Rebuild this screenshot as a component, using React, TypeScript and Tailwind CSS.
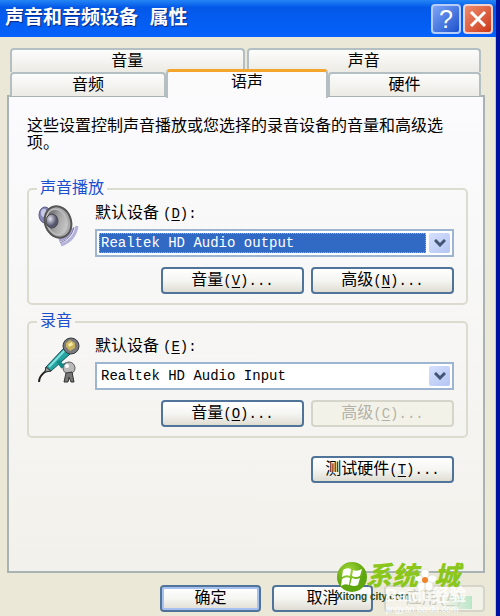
import React from "react";

const button =
  "flex h-[27px] items-center justify-center rounded-[4px] border-2 border-[#4f7399] bg-linear-to-b from-white via-[#f5f5f2] to-[#dfddd3] text-[16px] leading-[18px] text-black";
const disabledButton =
  "flex h-[27px] items-center justify-center rounded-[4px] border-2 border-[#d6d5ca] bg-[#f3f2e8] text-[16px] leading-[18px]";

function Key({ letter, suffix }: { letter: string; suffix: string }) {
  return (
    <span className="whitespace-pre text-[14px]">
      (<u className="underline underline-offset-2">{letter}</u>){suffix}
    </span>
  );
}

function Speaker() {
  return (
    <svg viewBox="0 0 44 44" className="h-[44px] w-[44px] shrink-0" aria-hidden="true">
      <defs>
        <linearGradient id="cone" x1="0" y1="0" x2="1" y2="1">
          <stop offset="0" stopColor="#4c4c50" />
          <stop offset="0.5" stopColor="#a3a3a3" />
          <stop offset="1" stopColor="#d8d8d8" />
        </linearGradient>
        <radialGradient id="dome" cx="0.35" cy="0.35">
          <stop offset="0" stopColor="#e4e4f2" />
          <stop offset="1" stopColor="#55556c" />
        </radialGradient>
      </defs>
      <ellipse cx="9" cy="11" rx="6" ry="8" fill="#8787b8" stroke="#5c5c8c" />
      <ellipse cx="8" cy="9" rx="3" ry="4" fill="#c9c9e8" />
      <path d="M36 24Q33 33 23 36" fill="none" stroke="#a7a3cf" strokeWidth="4" />
      <path d="M41 22Q39 36 25 41" fill="none" stroke="#b5b2da" strokeWidth="3" />
      <path d="M38 23Q36 34 24 39" fill="none" stroke="#7d79aa" strokeWidth="1" />
      <ellipse cx="22" cy="18" rx="13" ry="16" transform="rotate(-20 22 18)" fill="#a9a9ab" stroke="#555" strokeWidth="2" />
      <ellipse cx="21" cy="18" rx="10" ry="13" transform="rotate(-20 21 18)" fill="url(#cone)" stroke="#c4c4c4" />
      <ellipse cx="16" cy="17" rx="6" ry="7" fill="url(#dome)" stroke="#48484e" />
    </svg>
  );
}

function Microphone() {
  return (
    <svg viewBox="0 0 44 48" className="h-[48px] w-[44px] shrink-0" aria-hidden="true">
      <path d="M3 45Q3 39 10 34" fill="none" stroke="#222" strokeWidth="2" />
      <path d="M10 30L28 11L34 17L15 34L9 35Z" fill="#25a4a2" stroke="#164f58" />
      <path d="M13 30L29 13" stroke="#80e2dc" strokeWidth="2" />
      <path d="M9 35L10 30L15 34Z" fill="#999" stroke="#333" />
      <path d="M22 24L26 29L31 27" fill="none" stroke="#118a88" strokeWidth="4" />
      <circle cx="35" cy="9" r="8" fill="#77797e" stroke="#36383c" />
      <path d="M30 6L34 3L39 6L39 11L34 14L30 10Z" fill="#c9b35c" />
      <path d="M32 7L36 5L37 8L33 10Z" fill="#f3e9a8" />
      <circle cx="33" cy="31" r="6" fill="#b9b9b9" stroke="#5b5b5b" />
      <circle cx="31" cy="29" r="2" fill="#fff" />
      <path d="M30 36L28 45L32 45L33 40L35 45L38 45L36 35Z" fill="#777" stroke="#333" />
    </svg>
  );
}

function DeviceSelect({ id, value, active }: { id: string; value: string; active?: boolean }) {
  return (
    <div className="mt-[5px] flex h-[28px] gap-[3px] border-2 border-[#9db5d0] bg-white p-[2px]">
      <select
        id={id}
        className={
          active
            ? "h-full min-w-0 flex-1 appearance-none border border-dotted border-[#d9a650] bg-[#316ac5] pl-px text-[14px] leading-[16px] text-white outline-none"
            : "h-full min-w-0 flex-1 appearance-none border border-transparent bg-white pl-px text-[14px] leading-[16px] text-black outline-none"
        }
      >
        <option>{value}</option>
      </select>
      <span className="flex w-[21px] items-center justify-center rounded-[2px] bg-linear-to-br from-[#d5e0fd] to-[#b4c5f3]">
        <svg viewBox="0 0 12 8" className="h-[8px] w-[12px]" aria-hidden="true">
          <path d="M1 1L6 6L11 1" fill="none" stroke="#435574" strokeWidth="3" />
        </svg>
      </span>
    </div>
  );
}

function DeviceGroup(props: {
  id: string;
  legend: string;
  icon: React.ReactNode;
  letter: string;
  value: string;
  active?: boolean;
  volumeKey: string;
  advancedKey: string;
  advancedDisabled?: boolean;
}) {
  return (
    <fieldset className="min-w-0 rounded-[5px] border-2 border-[#dcdbd0] pr-[12px] pb-[9px] pl-[7px]">
      <legend className="ml-[1px] px-[3px] text-[16px] leading-[18px] text-[#1c4ed0]">{props.legend}</legend>
      <div className="flex gap-[15px] pt-[6px]">
        {props.icon}
        <div className="min-w-0 flex-1">
          <label htmlFor={props.id} className="flex items-baseline gap-1 text-[16px] leading-[20px]">
            默认设备
            <Key letter={props.letter} suffix=":" />
          </label>
          <DeviceSelect id={props.id} value={props.value} active={props.active} />
          <div className="mt-[10px] ml-[66px] grid grid-cols-2 gap-[7px]">
            <button type="button" className={button}>
              音量
              <Key letter={props.volumeKey} suffix="..." />
            </button>
            <button type="button" disabled={props.advancedDisabled} className={props.advancedDisabled ? `${disabledButton} text-[#b3b2a8]` : button}>
              高级
              <Key letter={props.advancedKey} suffix="..." />
            </button>
          </div>
        </div>
      </div>
    </fieldset>
  );
}

const tab =
  "flex h-[24px] items-center justify-center rounded-t-[4px] border-2 border-b-0 border-[#b3bfc2] bg-linear-to-b from-[#fcfcfb] to-[#ecebe5] pt-[2px] text-[16px] leading-[18px]";

function Watermark() {
  return (
    <div className="pointer-events-none absolute right-[18px] bottom-0 h-[56px] w-[142px]" aria-hidden="true">
      <svg viewBox="0 0 142 56" className="absolute inset-0 h-full w-full">
        <defs>
          <radialGradient id="orb" cx="0.4" cy="0.3">
            <stop offset="0" stopColor="#a6d93a" />
            <stop offset="1" stopColor="#5ea60d" />
          </radialGradient>
          <linearGradient id="glow" x1="0" y1="0" x2="1" y2="0">
            <stop offset="0" stopColor="#cfe8d4" stopOpacity="0" />
            <stop offset="1" stopColor="#b9e6c8" />
          </linearGradient>
        </defs>
        <rect x="104" y="36" width="32" height="13" fill="url(#glow)" />
        <circle cx="16" cy="17" r="15" fill="url(#orb)" />
        <path d="M7 10Q11 7 15 9L14 16Q10 14 6 17ZM17 10Q21 12 26 9L24 16Q20 18 16 16ZM6 19Q10 16 14 18L13 25Q9 23 5 26ZM16 18Q20 20 24 18L22 25Q18 27 14 25Z" fill="#fff" />
        <g fill="#fff" stroke="#e6e6d7">
          <ellipse cx="89" cy="14" rx="4" ry="5" />
          <ellipse cx="96" cy="19" rx="5" ry="4" />
          <ellipse cx="93" cy="26" rx="4" ry="5" />
          <ellipse cx="85" cy="26" rx="4" ry="5" />
          <ellipse cx="82" cy="19" rx="5" ry="4" />
        </g>
        <circle cx="89" cy="20" r="3" fill="#f0832a" />
      </svg>
      <span className="absolute top-[4px] left-[30px] text-[26px] leading-[28px] font-black text-[#8bc71b] italic">系统</span>
      <span className="absolute top-[4px] left-[98px] text-[26px] leading-[28px] font-black text-[#8bc71b] italic">城</span>
      <span className="absolute top-[31px] left-0 font-['Liberation_Sans',sans-serif] text-[10px] leading-[12px] font-bold whitespace-pre text-[#2c4a1c]">
        Xitong city.com
      </span>
      <span className="absolute top-[27px] left-[49px] font-['Liberation_Sans','Noto_Sans_CJK_SC',sans-serif] text-[17px] leading-[18px] font-bold whitespace-nowrap text-white/80">
        Baidu经验
      </span>
      <span className="absolute top-[44px] left-[50px] font-['Liberation_Sans',sans-serif] text-[9px] leading-[10px] text-white">
        jingyan.baidu.com
      </span>
    </div>
  );
}

export default function App() {
  return (
    <div className="relative w-full overflow-hidden border-r-4 border-[#0010a0] bg-[#ebe8d7] font-['Liberation_Mono','Noto_Sans_CJK_SC',monospace] text-black">
      <header className="-mr-1 flex h-[37px] items-center justify-between bg-linear-to-b from-[#2585f5] via-[#0458e8] via-20% to-[#0562fb] pr-[7px] pl-[5px]">
        <h1 className="text-[19px] leading-[24px] font-bold whitespace-pre text-white text-shadow-[1px_1px_1px_#0a2a80]">声音和音频设备 属性</h1>
        <div className="flex gap-[2px]">
          <button type="button" aria-label="帮助" className="flex h-[30px] w-[30px] items-center justify-center rounded-[4px] border-2 border-[#b5cdf8] bg-linear-to-br from-[#7ea4f6] to-[#1c50cc] font-['Liberation_Sans',sans-serif] text-[25px] leading-[26px] text-white">
            ?
          </button>
          <button type="button" aria-label="关闭" className="flex h-[30px] w-[30px] items-center justify-center rounded-[4px] border-2 border-[#f0d2d2] bg-linear-to-br from-[#ee8b6c] to-[#cb3512]">
            <svg viewBox="0 0 18 18" className="h-[18px] w-[18px]" aria-hidden="true">
              <path d="M2 2L16 16M16 2L2 16" stroke="#fff" strokeWidth="3" />
            </svg>
          </button>
        </div>
      </header>

      <main className="border-r border-[#a9c8f5] pt-[11px] pr-[10px] pl-[7px]">
        <div role="tablist" className="pr-[4px] pl-[3px]">
          <div className="grid grid-cols-2 gap-[2px]">
            <button type="button" role="tab" className={tab}>音量</button>
            <button type="button" role="tab" className={tab}>声音</button>
          </div>
          <div className="grid grid-cols-[156fr_162fr_153fr] items-end">
            <button type="button" role="tab" className={tab}>音频</button>
            <button type="button" role="tab" aria-selected="true" className="relative z-10 -mt-[3px] -mb-[2px] flex h-[29px] items-start justify-center rounded-t-[4px] border-x-2 border-t-3 border-x-[#b3bfc2] border-t-[#f3a62b] bg-[#fbfbfc] pt-[2px] text-[16px] leading-[18px]">
              语声
            </button>
            <button type="button" role="tab" className={tab}>硬件</button>
          </div>
        </div>

        <section role="tabpanel" className="-mt-px border-2 border-[#a9b3b4] bg-linear-to-b from-[#fbfbfe] to-[#f2f1eb] pt-[22px] pr-[15px] pb-[88px] pl-[18px]">
          <p className="min-h-[34px] text-[16px] leading-[17px]">
            这些设置控制声音播放或您选择的录音设备的音量和高级选
            <br />
            项。
          </p>
          <div className="mt-[27px] flex flex-col gap-[8px]">
            <DeviceGroup id="playback" legend="声音播放" icon={<Speaker />} letter="D" value="Realtek HD Audio output" active volumeKey="V" advancedKey="N" />
            <DeviceGroup id="recording" legend="录音" icon={<Microphone />} letter="E" value="Realtek HD Audio Input" volumeKey="O" advancedKey="C" advancedDisabled />
          </div>
          <div className="mt-[18px] flex justify-end pr-[14px]">
            <button type="button" className={`${button} w-[143px]`}>
              测试硬件
              <Key letter="T" suffix="..." />
            </button>
          </div>
        </section>

        <footer className="flex justify-end gap-[11px] pt-[12px] pb-[4px]">
          <button type="button" className={`${button} w-[101px] shadow-[inset_0_0_0_2px_#a6c1f0]`}>确定</button>
          <button type="button" className={`${button} w-[101px]`}>取消</button>
          <button type="button" disabled className={`${disabledButton} w-[101px] text-[#c9c8bc]`}>
            应用
            <Key letter="A" suffix="" />
          </button>
        </footer>
      </main>
      <Watermark />
    </div>
  );
}
